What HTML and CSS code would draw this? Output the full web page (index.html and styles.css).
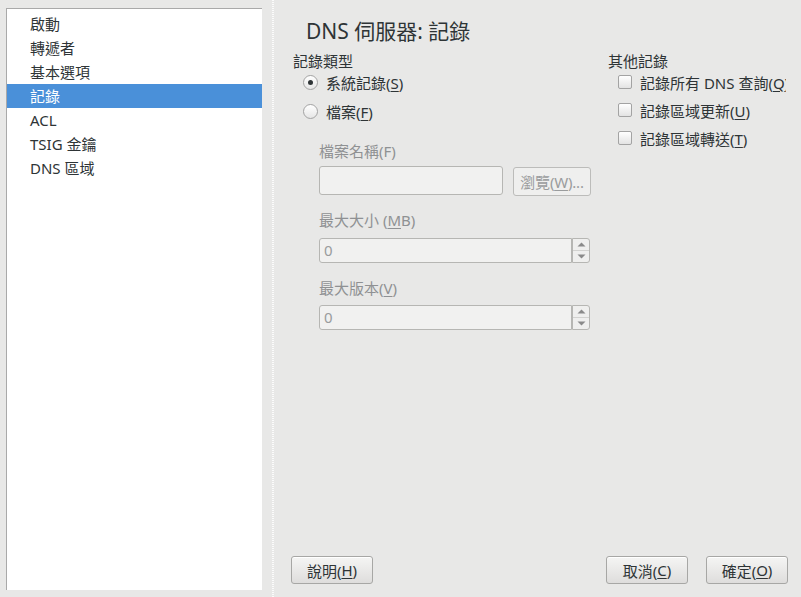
FILE: index.html
```html
<!DOCTYPE html>
<html lang="zh-Hant">
<head>
<meta charset="utf-8">
<title>DNS 伺服器: 記錄</title>
<link rel="stylesheet" href="styles.css">
</head>
<body>
<div class="side-wrap">
  <ul class="sidebar">
    <li>啟動</li>
    <li>轉遞者</li>
    <li>基本選項</li>
    <li class="sel">記錄</li>
    <li>ACL</li>
    <li>TSIG 金鑰</li>
    <li>DNS 區域</li>
  </ul>
</div>
<div class="sep"></div>
<div class="main">
  <h1 class="title">DNS 伺服器: 記錄</h1>
  <div class="cols">
    <div class="col-left">
      <div class="group-label">記錄類型</div>
      <div class="opt"><span class="radio checked"></span><span>系統記錄(<u>S</u>)</span></div>
      <div class="opt opt2"><span class="radio"></span><span>檔案(<u>F</u>)</span></div>
      <div class="file-sec">
        <div class="flabel first">檔案名稱(F)</div>
        <div class="frow">
          <div class="input file-input"></div>
          <div class="btn browse">瀏覽(<u>W</u>)...</div>
        </div>
        <div class="flabel">最大大小 (<u>M</u>B)</div>
        <div class="spin">
          <div class="input spin-input">0</div>
          <div class="spin-btns">
            <div class="sb up"><svg width="9" height="5" viewBox="0 0 9 5"><path d="M0.5 4.5 L4.5 0.5 L8.5 4.5 Z" fill="#8a8a8a"/></svg></div>
            <div class="sb down"><svg width="9" height="5" viewBox="0 0 9 5"><path d="M0.5 0.5 L4.5 4.5 L8.5 0.5 Z" fill="#8a8a8a"/></svg></div>
          </div>
        </div>
        <div class="flabel l3">最大版本(<u>V</u>)</div>
        <div class="spin s2">
          <div class="input spin-input">0</div>
          <div class="spin-btns">
            <div class="sb up"><svg width="9" height="5" viewBox="0 0 9 5"><path d="M0.5 4.5 L4.5 0.5 L8.5 4.5 Z" fill="#8a8a8a"/></svg></div>
            <div class="sb down"><svg width="9" height="5" viewBox="0 0 9 5"><path d="M0.5 0.5 L4.5 4.5 L8.5 0.5 Z" fill="#8a8a8a"/></svg></div>
          </div>
        </div>
      </div>
    </div>
    <div class="col-right">
      <div class="group-label">其他記錄</div>
      <div class="chk"><span class="box"></span><span>記錄所有 DNS 查詢(<u>Q</u>)</span></div>
      <div class="chk"><span class="box"></span><span>記錄區域更新(<u>U</u>)</span></div>
      <div class="chk"><span class="box"></span><span>記錄區域轉送(<u>T</u>)</span></div>
    </div>
  </div>
  <div class="buttons">
    <div class="btn">說明(<u>H</u>)</div>
    <div class="spacer"></div>
    <div class="btn">取消(<u>C</u>)</div>
    <div class="btn">確定(<u>O</u>)</div>
  </div>
</div>
</body>
</html>
```
FILE: styles.css
```css
* { box-sizing: border-box; }
html, body { margin: 0; padding: 0; }
body {
  width: 801px;
  height: 597px;
  overflow: hidden;
  background: #e8e8e7;
  font-family: "Noto Sans", "Noto Sans CJK TC", sans-serif;
  font-size: 15px;
  color: #2e3436;
  display: flex;
}
u { text-decoration: underline; text-underline-offset: 2px; text-decoration-thickness: 1px; }

.side-wrap {
  padding: 8px 0 7px 6px;
  width: 262px;
  flex: none;
}
.sidebar {
  list-style: none;
  margin: 0;
  padding: 3px 0 0 0;
  height: 100%;
  background: #fff;
  border-left: 1px solid #a9a9a9;
  border-top: 1px solid #a9a9a9;
}
.sidebar li {
  height: 24px;
  line-height: 24px;
  padding-left: 23px;
  white-space: nowrap;
}
.sidebar li.sel { background: #4a90d9; color: #fff; }

.sep {
  width: 16px;
  flex: none;
  background-image: repeating-linear-gradient(to bottom, #fbfbfb 0 1px, transparent 1px 2px);
  background-size: 2px 100%;
  background-repeat: no-repeat;
  background-position: 10px 0;
}

.main {
  flex: 1;
  display: flex;
  flex-direction: column;
  padding: 0 13px 13px 13px;
  min-width: 0;
}
.title {
  margin: 0 0 0 15px;
  padding-top: 18px;
  font-size: 21px;
  font-weight: normal;
  line-height: 26px;
  height: 44px;
  white-space: nowrap;
}
.cols {
  display: grid;
  grid-template-columns: 315px 1fr;
  margin-left: 2px;
  margin-top: 8px;
}
.group-label { line-height: 18px; height: 18px; white-space: nowrap; }
.opt {
  display: flex;
  align-items: center;
  height: 24px;
  padding-left: 10px;
  gap: 8px;
  white-space: nowrap;
}
.opt2 { margin-top: 5px; }
.radio {
  width: 15px;
  height: 15px;
  border-radius: 50%;
  border: 1px solid #a3a3a3;
  background: linear-gradient(#ffffff, #e6e6e6);
  position: relative;
  flex: none;
}
.radio.checked::after {
  content: "";
  position: absolute;
  left: 4px; top: 4px;
  width: 5px; height: 5px;
  border-radius: 50%;
  background: #2e3436;
}
.file-sec { padding-left: 26px; }
.flabel {
  color: #8f9193;
  line-height: 20px;
  height: 20px;
  margin-top: 14px;
  white-space: nowrap;
}
.flabel.first { margin-top: 18px; }
.flabel.l3 { margin-top: 15px; }
.frow {
  display: flex;
  gap: 10px;
  margin-top: 5px;
}
.input {
  background: #f1f1f0;
  border: 1px solid #b6b6b3;
  border-radius: 3px;
  color: #9a9c9d;
  padding-left: 4px;
}
.file-input { width: 184px; height: 29px; }
.btn {
  height: 28px;
  width: 82px;
  border: 1px solid #a7a7a5;
  border-radius: 3px;
  background: linear-gradient(#f5f5f4, #dedddc);
  display: flex;
  align-items: center;
  justify-content: center;
  white-space: nowrap;
  flex: none;
  box-shadow: inset 0 1px 0 #fff;
}
.browse {
  width: 78px;
  height: 29px;
  margin-top: 1px;
  color: #9a9c9d;
  border-color: #bcbcba;
  background: #efefee;
  box-shadow: none;
  letter-spacing: -0.2px;
}
.spin { display: flex; margin-top: 8px; height: 25px; }
.spin.s2 { margin-top: 7px; }
.spin-input {
  width: 253px;
  height: 25px;
  line-height: 23px;
  border-radius: 3px 0 0 3px;
}
.spin-btns {
  width: 18px;
  height: 25px;
  border: 1px solid #b6b6b3;
  border-radius: 0 3px 3px 0;
  background: #efefee;
  display: flex;
  flex-direction: column;
}
.sb {
  flex: 1;
  display: flex;
  align-items: center;
  justify-content: center;
}
.sb.up { border-bottom: 1px solid #d2d2d0; }

.col-right { overflow: hidden; white-space: nowrap; margin-right: 2px; }
.chk {
  display: flex;
  align-items: center;
  height: 24px;
  padding-left: 10px;
  gap: 8px;
  margin-bottom: 4px;
}
.box {
  width: 14px;
  height: 14px;
  border: 1px solid #a3a3a3;
  border-radius: 2px;
  background: linear-gradient(#ffffff, #e3e3e3);
  flex: none;
}

.buttons {
  margin-top: auto;
  display: flex;
  gap: 18px;
}
.spacer { flex: 1; }
```
